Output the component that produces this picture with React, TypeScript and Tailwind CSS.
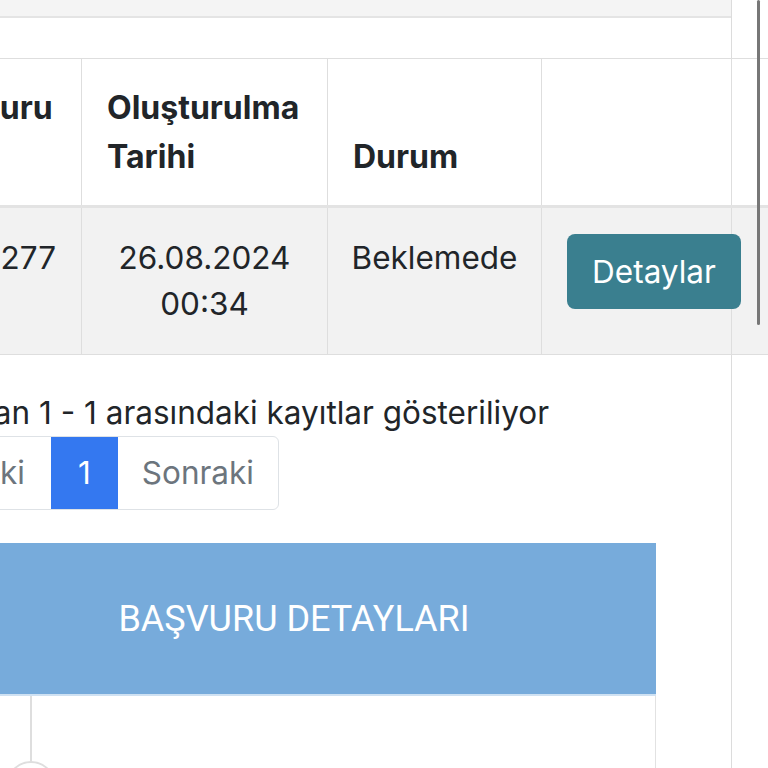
import React from "react";

const cellBorder = "border-r border-[#dedede]";

export default function App() {
  return (
    <div className="relative w-[768px] h-[768px] overflow-hidden bg-white text-[#212529] font-['Inter',sans-serif]">
      <div className="flex h-full">
        <div className="w-[732px] shrink-0 border-r border-[#dcdcdc] flex flex-col">
          {/* top card edge */}
          <div className="h-[18px] shrink-0 bg-[#f4f4f4] border-b-2 border-[#e4e4e4]" />
          <div className="h-[40px] shrink-0" />

          {/* table */}
          <div className="w-[768px] shrink-0 border-t border-[#dedede] border-b">
            <div className="flex border-b-[3px] border-[#e3e3e3] text-[32px] font-bold leading-[49px]">
              <div className={`w-[170px] -ml-[88px] shrink-0 pl-[11px] pr-[25px] py-[24px] whitespace-nowrap ${cellBorder}`}>
                Başvuru
                <br />
                No
              </div>
              <div className={`w-[246px] shrink-0 px-[25px] py-[24px] ${cellBorder}`}>
                Oluşturulma
                <br />
                Tarihi
              </div>
              <div className={`w-[214px] shrink-0 px-[25px] py-[24px] flex items-end ${cellBorder}`}>
                Durum
              </div>
              <div className={`w-[190px] shrink-0 ${cellBorder}`} />
              <div className="flex-1" />
            </div>
            <div className="flex bg-[#f2f2f2] text-[31.5px] leading-[46px] text-center">
              <div className={`w-[170px] -ml-[88px] shrink-0 px-[25px] py-[27px] flex justify-end items-start whitespace-nowrap ${cellBorder}`}>
                <span>1724626277</span>
              </div>
              <div className={`w-[246px] shrink-0 px-[10px] py-[27px] ${cellBorder}`}>
                26.08.2024
                <br />
                00:34
              </div>
              <div className={`w-[214px] shrink-0 px-[10px] py-[27px] ${cellBorder}`}>
                Beklemede
              </div>
              <div className={`w-[190px] shrink-0 pl-[25px] pt-[26px] ${cellBorder}`}>
                <button className="relative z-10 w-[174px] h-[75px] rounded-[8px] bg-[#3a7f8f] text-white text-[31.5px] leading-none">
                  Detaylar
                </button>
              </div>
              <div className="flex-1" />
            </div>
          </div>

          {/* info */}
          <div className="mt-[35px] shrink-0 text-[31.5px] leading-[46px] whitespace-nowrap">
            <span className="-ml-[86px]">kayıttan 1 - 1 arasındaki kayıtlar gösteriliyor</span>
          </div>

          {/* pagination */}
          <div className="flex h-[74px] shrink-0 w-fit -ml-[104px] border border-[#dee2e6] rounded-[6px] text-[31.5px] leading-none">
            <div className="flex items-center pl-[24px] pr-[26px] text-[#6c757d]">Önceki</div>
            <div className="flex items-center px-[27px] bg-[#3478f0] text-white">1</div>
            <div className="flex items-center pl-[24px] pr-[24px] text-[#6c757d]">Sonraki</div>
          </div>

          {/* details header */}
          <div className="mt-[33px] shrink-0 -ml-[68px] w-[724px] h-[153px] bg-[#77abdb] border-b-2 border-[#cfe1f2] flex items-center justify-center">
            <span className="text-white text-[36px] font-['Roboto',sans-serif]">BAŞVURU DETAYLARI</span>
          </div>
          <div className="w-[656px] flex-1 border-r border-[#e2e2e2] flex">
            <div className="w-[62px] flex flex-col items-center">
              <div className="w-[2px] h-[65px] shrink-0 bg-[#dedede]" />
              <div className="w-[50px] h-[50px] rounded-full border-2 border-[#dedede] shrink-0" />
            </div>
          </div>
        </div>
        <div className="flex-1" />
      </div>

      {/* scroll indicator */}
      <div className="absolute top-0 right-[8px] w-[3px] h-[325px] rounded-full bg-[#777777]" />
    </div>
  );
}
